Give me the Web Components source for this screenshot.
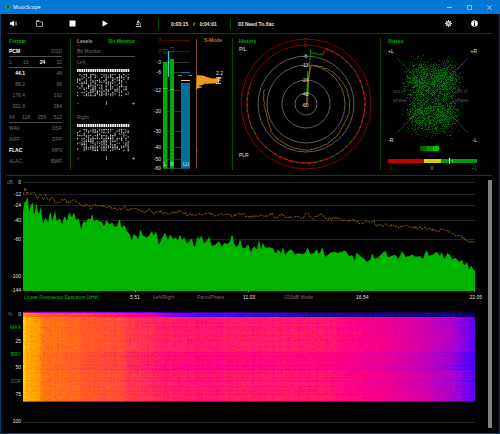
<!DOCTYPE html>
<html lang="en">
<head>
<meta charset="utf-8">
<title>MusicScope</title>
<style>
  :root {
    --green: #00b000;
    --green-line: #004c08;
    --rule: #505050;
    --dim: #707070;
    --text: #e0e0e0;
    --frame: #003c6c;
  }
  body {
    margin: 0;
    background: #000;
    color: var(--text);
    font: 5px/7px "Liberation Sans", Arial, sans-serif;
  }
</style>
</head>
<body>
<music-scope>
  <title-bar slot="title">MusicScope</title-bar>
  <transport-bar slot="transport" position="0:03:15" length="0:04:01">03 Need To.flac</transport-bar>
  <format-panel slot="panels"></format-panel>
  <bit-monitor slot="panels"></bit-monitor>
  <level-meter slot="panels"></level-meter>
  <history-plot slot="panels"></history-plot>
  <stereo-scope slot="panels"></stereo-scope>
  <spectrum-plot slot="charts"></spectrum-plot>
  <spectro-gram slot="charts"></spectro-gram>
</music-scope>

<script>
// small seeded generator, so the meters look the same on every load
function seeded(seed) {
  return () => {
    seed = (seed * 1664525 + 1013904223) % 4294967296;
    return seed / 4294967296;
  };
}

// linear interpolation over a flat list x0, y0, x1, y1, ...
function lerpAt(points, x) {
  for (let i = 2; i < points.length; i += 2) {
    if (x <= points[i]) {
      const t = (x - points[i - 2]) / (points[i] - points[i - 2]);
      return points[i - 1] + (points[i + 1] - points[i - 1]) * Math.max(0, t);
    }
  }
  return points[points.length - 1];
}

const base = `
  * { box-sizing: border-box; }
  button {
    display: block;
    padding: 0;
    border: 0;
    background: none;
    color: inherit;
    font: inherit;
    cursor: pointer;
    white-space: nowrap;
  }
  svg { display: block; }
  text { font-size: 5px; fill: var(--text); }
  .end { text-anchor: end; }
  .mid { text-anchor: middle; }
`;

class ScopeElement extends HTMLElement {
  connectedCallback() {
    if (this.shadowRoot) return;
    this.attachShadow({ mode: "open" });
    this.shadowRoot.innerHTML = `<style>${base}${this.styles()}</style>${this.render()}`;
    this.ready();
  }
  styles() { return ""; }
  render() { return ""; }
  ready() {}
}

class MusicScope extends ScopeElement {
  styles() {
    return `
      :host { display: flex; flex-direction: column; min-height: 100vh; box-sizing: border-box; border-bottom: 1px solid var(--frame); }
      main { flex: 1; border: solid var(--frame); border-width: 0 1px; padding: 0 7px 0 6px; }
      .panels {
        display: grid;
        grid-template-columns: 64fr 70fr 92fr 148fr 111fr;
        padding: 4px 0 5px;
        border-bottom: 1px solid var(--green-line);
      }
      .charts { display: grid; grid-template-columns: 1fr 4px; }
      .scroll { background: #808080; margin: 4px 0 0; }
    `;
  }
  render() {
    return `
      <slot name="title"></slot>
      <main>
        <slot name="transport"></slot>
        <div class="panels"><slot name="panels"></slot></div>
        <div class="charts">
          <div><slot name="charts"></slot></div>
          <div class="scroll"></div>
        </div>
      </main>
    `;
  }
}

class TitleBar extends ScopeElement {
  styles() {
    return `
      :host { display: flex; align-items: center; height: 14px; padding: 0 1px 0 5px; background: #0078d7; color: #fff; font-family: "Open Sans", sans-serif; }
      .name { flex: 1; margin-left: 2px; }
      button { width: 20px; height: 14px; display: grid; place-content: center; }
    `;
  }
  render() {
    return `
      <svg width="6" height="6" viewBox="0 0 6 6"><circle cx="3" cy="3" r="3" fill="#18a08c"/><path d="M3 .8v2L1.6 5M3 2.8l1.5 2M1.8 2.4l1.2-.8 1.3.6" fill="none" stroke="#053b3c" stroke-width=".8"/></svg>
      <span class="name"><slot></slot></span>
      <button aria-label="Minimize"><svg width="5" height="5"><path d="M0 2.5h5" stroke="#b8dcf8" stroke-width=".8"/></svg></button>
      <button aria-label="Maximize"><svg width="5" height="5"><path d="M.5.5h4v4h-4z" fill="none" stroke="#b8dcf8" stroke-width=".7"/></svg></button>
      <button aria-label="Close"><svg width="5" height="5"><path d="M.3.3l4.4 4.4M4.7.3L.3 4.7" stroke="#d8ecfc" stroke-width=".7"/></svg></button>
    `;
  }
}

class TransportBar extends ScopeElement {
  styles() {
    return `
      :host { display: flex; align-items: center; box-sizing: border-box; height: 20px; padding: 0 14px 0 3px; border-bottom: 1px solid var(--green-line); font-weight: bold; }
      .transport { display: flex; gap: 26px; margin: 0 16px 0 19px; }
      .time, .track { border-left: 1px solid var(--green-line); line-height: 12px; }
      .time { display: flex; gap: 5px; width: 72px; padding-left: 12px; }
      .track { flex: 1; padding-left: 7px; }
      .tools { display: flex; gap: 19px; }
    `;
  }
  render() {
    const teeth = [0, 45, 90, 135].map((a) =>
      `<path d="M3.5 0v7" stroke="#ddd" stroke-width="1.1" transform="rotate(${a} 3.5 3.5)"/>`).join("");
    return `
      <button aria-label="Volume"><svg width="7" height="7"><path d="M0 2.3h1.5L4 .5v6L1.5 4.7H0z" fill="#eee"/><path d="M4.8 2.2q.9 1.3 0 2.6M5.8 1.2q1.7 2.3 0 4.6" fill="none" stroke="#ccc" stroke-width=".8"/></svg></button>
      <div class="transport">
        <button aria-label="Open"><svg width="7" height="7"><path d="M.5 6.4V.9H3l.7 1h2.800v4.500z" fill="none" stroke="#bbb" stroke-width=".8"/><path d="M.3 1h2.800" stroke="#ddd"/></svg></button>
        <button aria-label="Stop"><svg width="7" height="7"><path d="M.5.5h6v6h-6z" fill="#fff"/></svg></button>
        <button aria-label="Play"><svg width="7" height="7"><path d="M.5.5l5.500 3-5.500 3z" fill="#fff"/></svg></button>
        <button aria-label="Analyze"><svg width="7" height="7"><path d="M2.900.2l1.300.4-.9 3-1.400-.4z" fill="#ddd"/><path d="M1.200 4.300h2.800M.8 6.500h5.400" stroke="#ddd" stroke-width=".9"/><path d="M4 2q2.300 1.200 1 4.300" fill="none" stroke="#ccc" stroke-width=".8"/></svg></button>
      </div>
      <div class="time"><span>${this.getAttribute("position")}</span><span>/</span><span>${this.getAttribute("length")}</span></div>
      <div class="track"><slot></slot></div>
      <div class="tools">
        <button aria-label="Settings"><svg width="7" height="7">${teeth}<circle cx="3.5" cy="3.5" r="2.3" fill="#ddd"/><circle cx="3.5" cy="3.5" r="1.1" fill="#555"/></svg></button>
        <button aria-label="Info"><svg width="7" height="7"><circle cx="3.5" cy="3.5" r="3.3" fill="#fff"/><path d="M3.500 1.200v1.100M3.500 2.900v2.700M2.700 5.400h1.700" stroke="#000" stroke-width=".9"/></svg></button>
      </div>
    `;
  }
}

class FormatPanel extends ScopeElement {
  styles() {
    return `
      :host { display: block; padding: 0 8px 0 2px; border-right: 1px solid var(--green-line); color: var(--dim); }
      h2 { margin: 0 0 1px; font-size: 5px; color: var(--green); }
      .row { display: flex; justify-content: space-between; height: 11px; line-height: 11px; }
      .rule { border-bottom: 1px solid var(--rule); line-height: 10px; }
      .rate span:first-child { width: 16px; text-align: right; }
      .on { color: #fff; font-weight: bold; }
    `;
  }
  render() {
    const active = ["PCM", "24", "44.1", "FLAC"];
    const rows = [
      ["rule", "PCM", "DSD"],
      ["rule", "1", "16", "24", "32"],
      ["rate", "44.1", "48"],
      ["rate", "88.2", "96"],
      ["rate", "176.4", "192"],
      ["rate", "352.8", "384"],
      ["rule", "64", "128", "256", "512"],
      ["", "WAV", "DSF"],
      ["", "AIFF", "DFF"],
      ["", "FLAC", "MP3"],
      ["", "ALAC", "BWF"],
    ];
    return "<h2>Format</h2>" + rows.map(([kind, ...cells]) =>
      `<div class="row ${kind}">${cells.map((c) =>
        `<span class="${active.includes(c) ? "on" : ""}">${c}</span>`).join("")}</div>`).join("");
  }
}

class BitMonitor extends ScopeElement {
  styles() {
    return `
      :host { display: block; padding: 0 6px; color: var(--dim); }
      nav { display: flex; justify-content: space-between; margin-bottom: 1px; color: #a0a0a0; }
      nav button { font-weight: bold; line-height: 7px; }
      nav .on { color: var(--green); }
      .label { height: 11px; line-height: 11px; }
      .rule { border-bottom: 1px solid var(--rule); line-height: 10px; }
      svg { width: 100%; margin-bottom: 4px; }
    `;
  }
  bits(seed) {
    const rand = seeded(seed);
    let out = "";
    for (let c = 0; c < 24; c++) {
      const x = (c * 2.2).toFixed(1);
      out += `<rect x="${x}" y="0" width="1.6" height="3" fill="#fff"/>`;
      const density = c === 1 ? 0.25 : 0.4 + rand() * 0.5;
      for (let r = 0; r < 15; r++) {
        if (rand() > density) continue;
        const g = Math.round(120 + rand() * 120);
        out += `<rect x="${x}" y="${(5 + r * 1.5).toFixed(1)}" width="1.2" height="1.2" fill="rgb(${g},${g},${g})"/>`;
      }
    }
    return `<svg viewBox="0 -1 58 40">${out}
      <text x="0" y="36">-</text><path d="M29.5 32v4" stroke="#aaa" stroke-width=".8"/><text class="end" x="58" y="36">+</text></svg>`;
  }
  render() {
    return `
      <nav><button>Levels</button><button class="on">Bit Monitor</button></nav>
      <div class="label rule">Bit Monitor</div>
      <div class="label">Left</div>${this.bits(7)}
      <div class="label">Right</div>${this.bits(41)}
    `;
  }
}

class LevelMeter extends ScopeElement {
  styles() {
    return `
      :host { display: block; border-right: 1px solid var(--green-line); }
      svg { width: 100%; }
      .over { fill: #c00000; }
      .mode { fill: #b87818; font-weight: bold; }
    `;
  }
  render() {
    const scale = [[3, 40], [0, 51], [-3, 62], [-6, 72], [-12, 90], [-20, 111], [-30, 131], [-40, 147], [-50, 159], [-60, 168]];
    const ticks = scale.map(([v, y]) => `
      <path d="M163 ${y}.5h27" stroke="${v >= 0 ? "#600000" : "#333"}"/>
      <text class="end ${v >= 0 ? "over" : ""}" x="161" y="${y + 2}">${v}</text>`).join("");
    return `
      <svg viewBox="141 38 91 132">
        ${ticks}
        <path d="M163 62h4.5v106.500H163zM170 59h4v109.500h-4z" fill="#00aa08"/>
        <path d="M163 88.500h4.500M170 89.500h4" stroke="#20f020"/>
        <path d="M163 49.500h4.500M170 47.500h4" stroke="#d00000"/>
        <path d="M163 53h4.500M170 52h4" stroke="#007000"/>
        <path d="M168.500 51v26" stroke="#38c8f0" stroke-width="1.300"/>
        <path d="M181 83h9v85.500h-9z" fill="#00709c"/>
        <path d="M181 72.500h9" stroke="#0080b0"/>
        <path d="M178 75.500h4M189 75.500h3" stroke="#c87c14"/>
        <path d="M181 80.500h9" stroke="#f4c890"/>
        <path d="M196.500 39v129.500" stroke="#8a5a10" stroke-width=".9"/>
        <path d="M197 75l7 .7 3 1.300 5 1.500 11-.8-4 2 2 1-4 1.500 2 1-14 .5-3 1.500-4 .2 3 1 1.500 1-4 .5-2.500 1.500z" fill="#e89c20"/>
        <path d="M196 150.500h2" stroke="#8a5a10"/>
        <path d="M216 77.500h5M218.500 77.500v6M216 83.500h5" stroke="#ddd" stroke-width=".8" fill="none"/>
        <text x="216" y="75">2.2</text>
        <text class="mode" x="204" y="42">S-Mode</text>
        <text class="mid" x="165" y="166">L</text>
        <text class="mid" x="172" y="166">R</text>
        <text class="mid" x="186" y="166">LU</text>
      </svg>
    `;
  }
}

class HistoryPlot extends ScopeElement {
  styles() {
    return `
      :host { display: block; border-right: 1px solid var(--green-line); }
      svg { width: 100%; }
      .over { fill: #c00000; }
      .title { fill: var(--green); font-weight: bold; }
    `;
  }
  // angle in degrees clockwise from the top, radius by callback
  arc(from, to, radius) {
    let d = "";
    for (let a = from; a <= to; a += 2) {
      const r = radius(a);
      const t = (a * Math.PI) / 180;
      d += `${d ? "L" : "M"}${(306 + r * Math.sin(t)).toFixed(1)} ${(104 - r * Math.cos(t)).toFixed(1)}`;
    }
    return d;
  }
  render() {
    const rand = seeded(12);
    const rings = [[65, "#980000"], [59, "#980000"], [48, "#686868"], [39, "#686868"], [24, "#686868"], [11, "#686868"]]
      .map(([r, c]) => `<circle cx="306" cy="104" r="${r}" stroke="${c}" fill="none" stroke-width=".9"/>`).join("");
    const labels = [[3, 40], [0, 45], [-6, 56], [-12, 65], [-24, 80], [-48, 94], [-60, 105]]
      .map(([v, y]) => `<text class="mid ${v >= 0 ? "over" : ""}" x="305" y="${y + 2}">${v}</text>`).join("");
    const peak = this.arc(20, 290, () => 58.5 + rand() * 0.8);
    const loud = [8, 39, 20, 40, 45, 42, 70, 43, 95, 44, 120, 43, 150, 45, 180, 46, 205, 45, 225, 45, 250, 41, 265, 41, 280, 43, 290, 44];
    const body = this.arc(8, 290, (a) => lerpAt(loud, a) + rand() - 0.5);
    return `
      <svg viewBox="233 38 147 132">
        ${rings}
        <path d="${peak}" fill="none" stroke="#c00000"/>
        <path d="${peak}" fill="none" stroke="#00a000" stroke-dasharray="2 4"/>
        <path d="M325 49.500l-1.500 5-1-2" fill="none" stroke="#d00000" stroke-width=".9"/>
        <path d="M323 55l-2-1-2 .5-3-1.500-2 1-2-1.500-1 1-.5-4-3 53M307 96l.5-25 1 8" fill="none" stroke="#009c00" stroke-width=".9"/>
        <path d="${body}" fill="none" stroke="#a87020" stroke-width=".8"/>
        <path d="M311 66l-2 9-2 20-.5 10" fill="none" stroke="#c88018" stroke-width=".8"/>
        <path d="M279 157l2 2M290 160l1 3M310 162v3" stroke="#d00000" stroke-width=".9"/>
        ${labels}
        <text class="title" x="239" y="43">History</text>
        <text x="239" y="51">P/L</text>
        <text x="239" y="157">PLR</text>
      </svg>
    `;
  }
}

class StereoScope extends ScopeElement {
  styles() {
    return `
      :host { display: block; }
      svg { width: 100%; }
      .title { fill: var(--green); font-weight: bold; }
      .phase text { fill: #505050; }
      .minus { fill: #c00000; }
      .zero { fill: #c8b800; }
      .plus { fill: #00a000; }
    `;
  }
  render() {
    const rand = seeded(99);
    const clouds = ["", "", ""];
    // four overlapping clusters, the outline is a rounded block
    for (let i = 0; i < 3600; i++) {
      const side = rand() < 0.5 ? -1 : 1;
      const half = rand() < 0.55 ? -1 : 1;
      const dx = (rand() + rand() + rand() - 1.5) * 15;
      const dy = (rand() + rand() + rand() - 1.5) * 18;
      const x = Math.round(432 + side * 11 + dx);
      const y = Math.round(97 + half * 17 + dy);
      clouds[i % 3] += `M${x} ${y}h1v1h-1z`;
    }
    let balance = "";
    for (let x = 420; x < 439; x++) {
      const g = Math.round(70 + (x - 419) * 6 + rand() * 60);
      balance += `<rect x="${x}" y="146" width="1" height="5" fill="rgb(0,${g},0)"/>`;
    }
    return `
      <svg viewBox="381 38 111 132">
        <path d="${clouds[0]}" fill="#003a00" fill-opacity=".8"/>
        <path d="${clouds[1]}" fill="#005000" fill-opacity=".7"/>
        <path d="${clouds[2]}" fill="#008a10" fill-opacity=".7"/>
        <path d="M397 58l71 75M468 58l-71 75" stroke="#808080" stroke-opacity=".4"/>
        <g class="phase">
          <text x="393" y="93">out of</text><text x="393" y="102">phase</text>
          <text x="455" y="93">out of</text><text x="455" y="102">phase</text>
        </g>
        ${balance}
        <path d="M388 159h36v4h-36z" fill="#c00000"/>
        <path d="M424 159h17v4h-17z" fill="#d8d000"/>
        <path d="M441 159h36v4h-36z" fill="#009810"/>
        <path d="M449.500 158v6" stroke="#fff"/><path d="M452.500 159v4" stroke="#80d080" stroke-width=".7"/>
        <text class="title" x="388" y="43">Stereo</text>
        <text x="388" y="53">+L</text><text class="end" x="477" y="53">+R</text>
        <text x="388" y="142">-R</text><text class="end" x="477" y="142">-L</text>
        <text class="minus" x="388" y="170">-1</text>
        <text class="mid zero" x="432" y="170">0</text>
        <text class="end plus" x="477" y="170">+1</text>
      </svg>
    `;
  }
}

// levels in thirds of a pixel, x counted from 68
const LEVEL = [68,115,72,78,76,85,82,62,86,115,92,90,98,84,102,130,108,78,114,125,122,95,127,148,136,130,143,145,150,110,156,142,164,108,170,142,178,130,185,150,193,122,200,142,206,112,214,130,221,115,228,140,234,128,242,165,250,138,257,145,264,130,270,138,275,118,281,140,290,136,296,142,303,140,312,158,318,135,328,152,334,142,343,158,350,155,358,132,364,160,373,152,380,172,388,178,394,200,400,178,408,185,414,195,420,164,428,184,440,190,448,182,454,168,460,186,468,170,476,212,486,190,494,174,502,198,510,180,518,195,526,188,532,202,539,180,546,198,552,186,558,205,566,202,574,190,583,222,592,184,597,196,603,182,610,206,618,202,627,184,634,215,645,212,656,200,664,218,672,205,684,208,690,198,696,176,702,212,712,218,720,192,726,222,736,220,745,208,750,235,760,215,770,225,776,195,782,225,788,205,796,222,804,218,818,222,826,238,834,225,842,236,848,218,854,240,865,228,874,225,884,240,894,236,906,240,915,235,922,218,930,240,942,236,950,225,957,240,966,217,974,248,986,238,1000,232,1012,235,1024,232,1036,228,1046,245,1056,242,1064,260,1068,234,1080,245,1090,252,1100,262,1110,256,1116,235,1122,254,1132,250,1144,240,1155,228,1162,248,1174,245,1184,240,1194,255,1206,230,1216,248,1226,245,1236,240,1246,248,1258,244,1268,255,1278,226,1286,244,1298,240,1310,232,1318,245,1324,232,1332,256,1340,236,1348,240,1356,255,1366,250,1376,262,1384,256,1392,275,1400,262,1406,285,1414,272,1420,290,1426,282];
const PEAK = [68,60,74,42,80,58,90,55,95,62,102,52,110,75,120,62,128,78,136,65,145,82,155,68,165,85,178,84,192,75,205,88,220,78,235,90,248,95,260,92,272,102,285,92,300,98,325,98,340,105,368,105,373,93,380,110,395,102,415,106,430,115,445,108,460,118,480,112,500,120,520,115,540,110,560,122,590,122,627,116,640,124,670,120,700,126,720,120,750,128,765,128,785,122,800,126,815,118,822,132,845,122,858,134,880,125,900,134,922,118,935,136,962,118,980,135,1010,132,1035,142,1060,138,1085,150,1105,142,1122,142,1128,155,1160,152,1190,160,1220,156,1250,162,1280,162,1310,170,1325,166,1350,175,1370,184,1390,190,1405,202,1425,208];

class SpectrumPlot extends ScopeElement {
  styles() {
    return `
      :host { display: grid; grid-template-columns: 16px 1fr 13px; }
      .unit { fill: var(--dim); }
      .plot { width: 100%; height: 116px; }
      footer {
        grid-column: 2 / 4;
        display: grid;
        grid-template-columns: 106fr 23fr 44fr 46fr 40fr 73fr 63fr 63fr;
        padding: 0 6px 0 1px;
      }
      footer button { text-align: left; line-height: 8px; color: var(--dim); }
      footer .on { color: #00c000; }
      footer span { padding-top: 2px; }
      footer :last-child { text-align: right; }
    `;
  }
  render() {
    const rand = seeded(5);
    const scale = [[0, 6], [-12, 18], [-24, 29], [-40, 44], [-60, 63], [-100, 100], [-144, 114]];
    const grid = scale.slice(0, 5).map(([, y]) => `M0 ${y}.5h452`).join("");
    const labels = scale.map(([v, y]) => `<text class="end" x="14" y="${y + 2}">${v}</text>`).join("");
    let level = "M0 115";
    let peak = "";
    for (let x = 0; x <= 452; x++) {
      const px = x * 3 + 68;
      level += `L${x} ${(lerpAt(LEVEL, px) / 3 - 2 + rand() * 0.8).toFixed(1)}`;
      peak += `${x ? "L" : "M"}${x} ${(lerpAt(PEAK, px) / 3 - 3.5 + rand() * 3).toFixed(1)}`;
    }
    return `
      <svg width="16" height="116" viewBox="0 0 16 116">
        <text class="unit" x="0" y="8">dB</text>${labels}
      </svg>
      <svg class="plot" viewBox="0 0 452 116" preserveAspectRatio="none">
        <path d="${grid}" stroke="#222"/>
        <path d="${peak}" fill="none" stroke="#a8740c" stroke-width=".7" stroke-dasharray="3 1"/>
        <path d="${level}L452 115z" fill="#00b400"/>
        <path d="M112.5 115v2M225.5 115v2M338.5 115v2M451.5 115v2" stroke="#999"/>
      </svg>
      <footer>
        <button class="on">Linear Frequency Spectrum [kHz]</button><span>5.51</span>
        <button>Left/Right</button><button>Pano/Phase</button><span>11.03</span>
        <button>-200dB Mode</button><span>16.54</span><span>22.05</span>
      </footer>
    `;
  }
}

// colour map of the spectrogram, from silent to loud
const HEAT = [[0, 0, 40], [28, 0, 150], [80, 0, 255], [160, 0, 215], [215, 0, 165], [255, 0, 130], [255, 55, 75], [255, 105, 25], [255, 165, 0], [255, 225, 20]];

class SpectroGram extends ScopeElement {
  styles() {
    return `
      :host { display: grid; grid-template-columns: 16px 1fr 13px; margin-top: 7px; }
      .axis { display: grid; grid-template-rows: repeat(9, 1fr); height: 120px; align-items: center; justify-items: end; padding-right: 2px; }
      .zero { display: flex; justify-content: space-between; width: 100%; padding-left: 1px; }
      .on { color: #00c000; }
      .off { color: var(--dim); }
      canvas { display: block; width: 100%; height: 90px; margin-top: 4px; }
      hr { margin: 20px 0 0; border: 0; border-top: 1px solid #222; }
    `;
  }
  render() {
    return `
      <div class="axis">
        <div class="zero"><span class="off">%</span><span>0</span></div>
        <button class="on">MAX</button><span>25</span>
        <button class="on">BRY</button><span>50</span>
        <button class="off">COF</button><span>75</span>
        <span></span><span>100</span>
      </div>
      <div><canvas width="452" height="90"></canvas><hr></div>
    `;
  }
  ready() {
    const ctx = this.shadowRoot.querySelector("canvas").getContext("2d");
    const img = ctx.createImageData(452, 90);
    const rand = seeded(2024);
    const tone = [0, 0.96, 3, 0.9, 15, 0.87, 20, 0.8, 55, 0.77, 60, 0.74, 95, 0.72, 105, 0.68, 140, 0.62, 180, 0.6, 230, 0.61, 300, 0.6, 330, 0.56, 370, 0.5, 410, 0.42, 430, 0.36, 440, 0.3, 452, 0.24];
    const intro = [0, 0.85, 20, 0.72, 60, 0.68, 95, 0.6, 130, 0.5, 140, 0.35, 160, 0.25, 220, 0.2, 260, 0.16, 300, 0.11, 430, 0.09, 452, 0.05];
    const cols = Array.from({ length: 452 }, () => (rand() - 0.5) * 0.025);
    for (let y = 0; y < 90; y++) {
      let row = (rand() - 0.5) * 0.035;
      if (y > 39 && y < 60) row -= 0.035;
      if (rand() < 0.08) row -= 0.03;
      if (y === 59) row += 0.05;
      let grain = 0;
      for (let x = 0; x < 452; x++) {
        if (x % 2 === 0) grain = (rand() - 0.5) * 0.05;
        let v = y < 5 ? lerpAt(intro, x) : lerpAt(tone, x);
        if (y === 0) v *= 0.5;
        v += cols[x] + grain + row * (y < 5 ? 0.3 : Math.min(1, x / 200 + 0.3));
        const p = Math.min(0.999, Math.max(0, v)) * (HEAT.length - 1);
        const a = HEAT[Math.floor(p)];
        const b = HEAT[Math.floor(p) + 1];
        const f = p % 1;
        const fade = y === 89 ? 0.6 : 1;
        for (let c = 0; c < 3; c++) img.data[(y * 452 + x) * 4 + c] = (a[c] + (b[c] - a[c]) * f) * fade;
        img.data[(y * 452 + x) * 4 + 3] = 255;
      }
    }
    ctx.putImageData(img, 0, 0);
  }
}

customElements.define("music-scope", MusicScope);
customElements.define("title-bar", TitleBar);
customElements.define("transport-bar", TransportBar);
customElements.define("format-panel", FormatPanel);
customElements.define("bit-monitor", BitMonitor);
customElements.define("level-meter", LevelMeter);
customElements.define("history-plot", HistoryPlot);
customElements.define("stereo-scope", StereoScope);
customElements.define("spectrum-plot", SpectrumPlot);
customElements.define("spectro-gram", SpectroGram);
</script>
</body>
</html>
